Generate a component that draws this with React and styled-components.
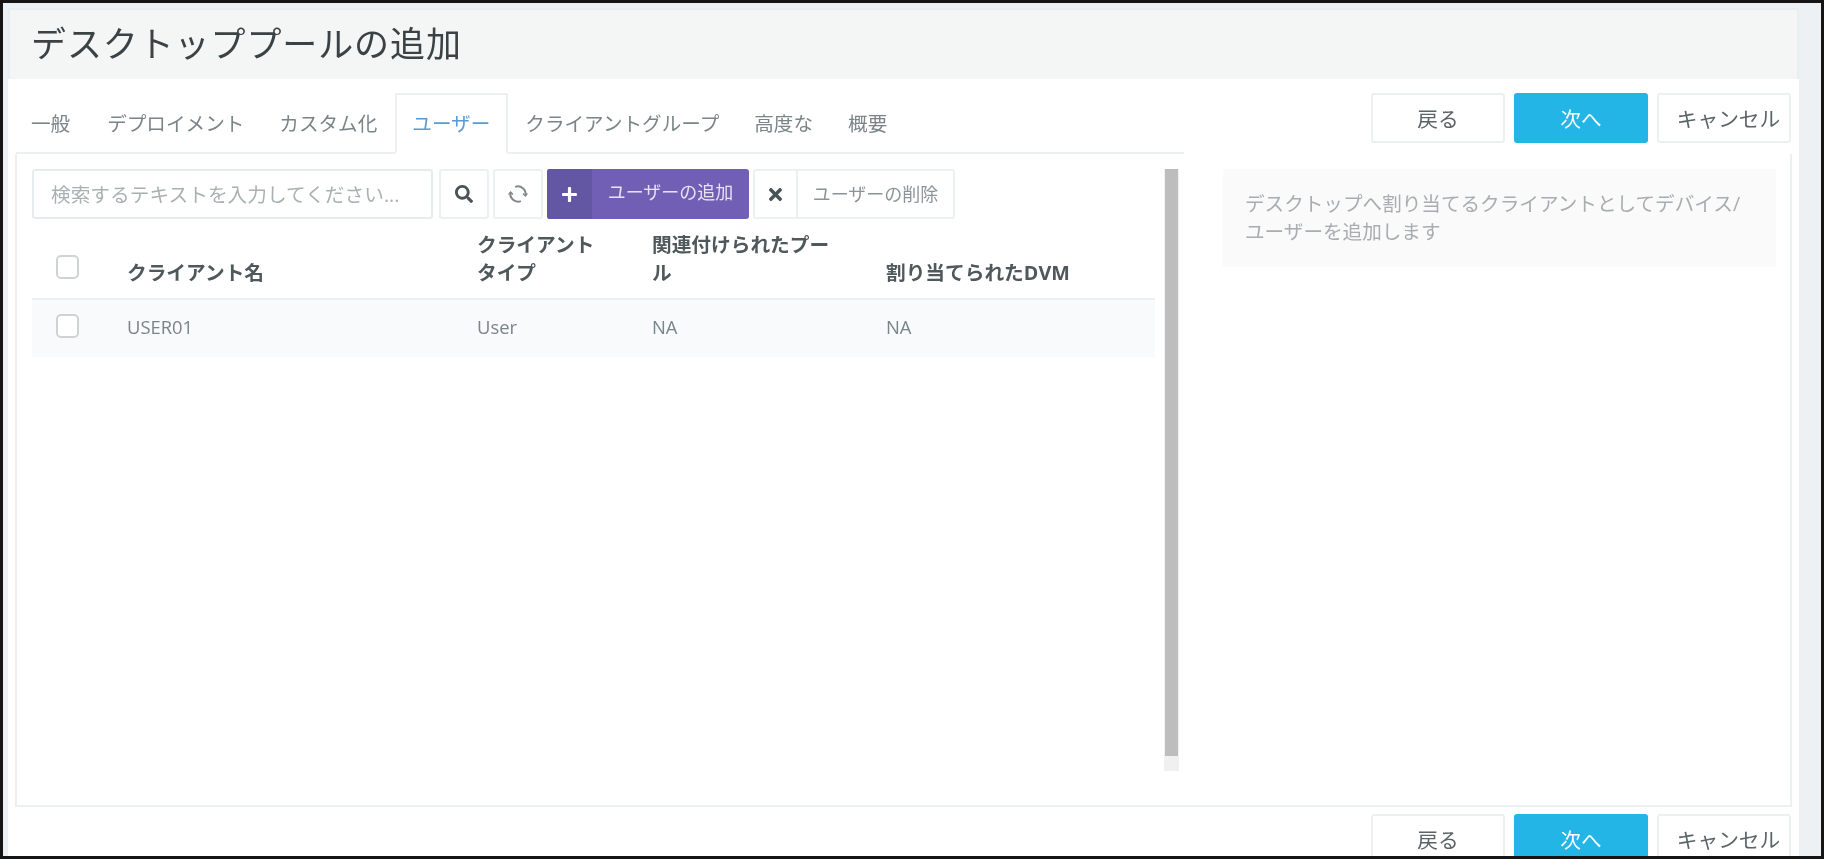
import React from 'react';
import styled, { createGlobalStyle } from 'styled-components';
import { FaSearch, FaPlus, FaTimes } from 'react-icons/fa';

const GlobalStyle = createGlobalStyle`
    html, body {
        margin: 0;
        height: 100%;
        overflow: hidden;
        background: #fff;
    }
    * { box-sizing: border-box; }
`;

const tabs = ['一般', 'デプロイメント', 'カスタム化', 'ユーザー', 'クライアントグループ', '高度な', '概要'];

const rows = [{ name: 'USER01', type: 'User', pool: 'NA', dvm: 'NA' }];

const RefreshIcon = () => (
    <svg width="20" height="20" viewBox="0 0 20 20" fill="none" stroke="#80888b" strokeWidth="2">
        <path d="M7.2 2.9A7.6 7.6 0 0 1 17.4 11.6" />
        <path d="M12.8 17.1A7.6 7.6 0 0 1 2.6 8.4" />
        <path d="M15 9.6l2.4 2.4 2-2.6" strokeWidth="1.4" />
        <path d="M5 10.4L2.6 8 .6 10.6" strokeWidth="1.4" />
    </svg>
);

const Actions = () => (
    <ActionRow>
        <ActionButton>戻る</ActionButton>
        <ActionButton primary>次へ</ActionButton>
        <ActionButton>キャンセル</ActionButton>
    </ActionRow>
);

const App = () => {
    return (
        <Frame>
            <GlobalStyle />
            <Sheet>
                <TitleBar>デスクトッププールの追加</TitleBar>
                <TopRow>
                    <TabList>
                        {tabs.map((tab) => (
                            <Tab key={tab} active={tab === 'ユーザー'}>{tab}</Tab>
                        ))}
                    </TabList>
                    <Actions />
                </TopRow>
                <Panel>
                    <Content>
                        <Toolbar>
                            <SearchInput placeholder="検索するテキストを入力してください..." />
                            <IconButton><FaSearch size={18} color="#4a5356" /></IconButton>
                            <IconButton><RefreshIcon /></IconButton>
                            <SplitButton purple>
                                <SplitIcon purple><FaPlus size={17} color="#fff" /></SplitIcon>
                                <SplitLabel>ユーザーの追加</SplitLabel>
                            </SplitButton>
                            <SplitButton>
                                <SplitIcon><FaTimes size={19} color="#4a5356" /></SplitIcon>
                                <SplitLabel>ユーザーの削除</SplitLabel>
                            </SplitButton>
                        </Toolbar>
                        <HeaderRow>
                            <Checkbox />
                            <span>クライアント名</span>
                            <span>クライアント<br />タイプ</span>
                            <span>関連付けられたプー<br />ル</span>
                            <span>割り当てられたDVM</span>
                        </HeaderRow>
                        {rows.map((row) => (
                            <DataRow key={row.name}>
                                <Checkbox />
                                <span>{row.name}</span>
                                <span>{row.type}</span>
                                <span>{row.pool}</span>
                                <span>{row.dvm}</span>
                            </DataRow>
                        ))}
                    </Content>
                    <ScrollTrack><ScrollThumb /></ScrollTrack>
                    <HelpBox>
                        デスクトップへ割り当てるクライアントとしてデバイス/<br />
                        ユーザーを追加します
                    </HelpBox>
                </Panel>
                <BottomRow>
                    <Actions />
                </BottomRow>
            </Sheet>
        </Frame>
    );
};

export default App;

const Frame = styled.div`
    width: 1824px;
    height: 859px;
    overflow: hidden;
    border: 3px solid #151515;
    padding: 5px 22px 0 5px;
    background: #eef1f3;
    font-family: "Open Sans", "Noto Sans CJK JP", sans-serif;
    filter: blur(0.55px);
`;

const Sheet = styled.div`
    height: 100%;
    background: #fff;
    display: flex;
    flex-direction: column;
`;

const TitleBar = styled.div`
    height: 71px;
    flex-shrink: 0;
    padding-left: 21px;
    background: #f4f6f6;
    border: 2px solid #e9eef0;
    border-bottom: none;
    color: #3a4245;
    font-size: 35px;
    line-height: 68px;
    letter-spacing: 0.9px;
`;

const TopRow = styled.div`
    display: flex;
    height: 75px;
    flex-shrink: 0;
    padding-left: 8px;
`;

const TabList = styled.div`
    width: 1168px;
    height: 75px;
    padding: 14px 0 0 13px;
    display: flex;
    border-bottom: 2px solid #ecf0f1;
`;

const Tab = styled.div`
    height: 61px;
    padding: 0 15.5px;
    font-size: 19.6px;
    line-height: 58px;
    color: ${(props) => (props.active ? '#5b9bd5' : '#7b8588')};
    background: ${(props) => (props.active ? '#fff' : 'transparent')};
    border: 2px solid ${(props) => (props.active ? '#ecf0f1' : 'transparent')};
    border-bottom: ${(props) => (props.active ? '2px solid #fff' : 'none')};
    border-radius: 2px 2px 0 0;

    &:first-child {
        padding: 0 17.5px 0 0;
    }
`;

const ActionRow = styled.div`
    display: flex;
    gap: 9px;
    margin-left: auto;
    padding: 14px 8px 0 0;
`;

const ActionButton = styled.button`
    width: 134px;
    height: 50px;
    padding: 0;
    font-family: inherit;
    font-size: 20.7px;
    color: ${(props) => (props.primary ? '#fff' : '#5b6467')};
    background: ${(props) => (props.primary ? '#22b5e6' : '#fff')};
    border: 2px solid ${(props) => (props.primary ? '#22b5e6' : '#ecf0f1')};
    border-radius: 3px;

    &:last-child {
        padding-left: 9px;
    }
`;

const Panel = styled.div`
    flex: 0 0 653px;
    margin: 0 7px;
    padding: 15px 14px 0 15px;
    display: flex;
    align-items: flex-start;
    border: 2px solid #ecf0f1;
    border-top: none;
`;

const Content = styled.div`
    width: 1123px;
    flex-shrink: 0;
`;

const Toolbar = styled.div`
    display: flex;
    gap: 4px;
    height: 50px;
`;

const SearchInput = styled.input`
    width: 401px;
    height: 50px;
    padding: 0 17px;
    margin-right: 2px;
    font-family: inherit;
    font-size: 19.7px;
    border: 2px solid #e6eced;
    border-radius: 3px;
    outline: none;

    &::placeholder {
        color: #a9b1b3;
        opacity: 1;
    }
`;

const IconButton = styled.button`
    width: 50px;
    height: 50px;
    padding: 0;
    display: flex;
    align-items: center;
    justify-content: center;
    background: #fff;
    border: 2px solid #ecf0f1;
    border-radius: 3px;
`;

const SplitButton = styled.div`
    width: 202px;
    height: 50px;
    display: flex;
    overflow: hidden;
    color: ${(props) => (props.purple ? '#e6e2f4' : '#8b9497')};
    background: ${(props) => (props.purple ? '#705fb5' : '#fff')};
    border: ${(props) => (props.purple ? 'none' : '2px solid #ecf0f1')};
    border-radius: 3px;
`;

const SplitIcon = styled.div`
    width: ${(props) => (props.purple ? '45px' : '43px')};
    flex-shrink: 0;
    display: flex;
    align-items: center;
    justify-content: center;
    background: ${(props) => (props.purple ? '#6356a3' : '#fff')};
    border-right: ${(props) => (props.purple ? 'none' : '2px solid #ecf0f1')};
`;

const SplitLabel = styled.span`
    flex: 1;
    text-align: center;
    font-size: 18px;
    line-height: 47px;
`;

const Row = styled.div`
    display: grid;
    grid-template-columns: 95px 350px 175px 234px 1fr;
`;

const HeaderRow = styled(Row)`
    height: 81px;
    align-items: end;
    padding-bottom: 11px;
    border-bottom: 2px solid #ecf0f1;
    color: #4f585b;
    font-size: 19.7px;
    font-weight: 700;
    line-height: 28px;

    & > :first-child {
        margin-bottom: 8px;
    }
`;

const DataRow = styled(Row)`
    height: 57px;
    padding-bottom: 5px;
    align-items: center;
    background: #f9fafb;
    color: #7b8588;
    font-size: 18.4px;
`;

const Checkbox = styled.div`
    width: 23px;
    height: 24px;
    margin-left: 24px;
    background: #fff;
    border: 2px solid #cfd3d4;
    border-radius: 5px;
`;

const ScrollTrack = styled.div`
    width: 15px;
    height: 602px;
    margin-left: 9px;
    flex-shrink: 0;
    background: #f0f0f0;
`;

const ScrollThumb = styled.div`
    height: 587px;
    margin: 0 1px;
    background: #bdbdbd;
`;

const HelpBox = styled.div`
    flex: 1;
    height: 98px;
    margin-left: 44px;
    padding: 21px 0 0 22px;
    background: #fafafa;
    color: #a8adaf;
    font-size: 19.6px;
    line-height: 28px;
`;

const BottomRow = styled.div`
    display: flex;
    height: 60px;
    margin-top: -7px;
`;
